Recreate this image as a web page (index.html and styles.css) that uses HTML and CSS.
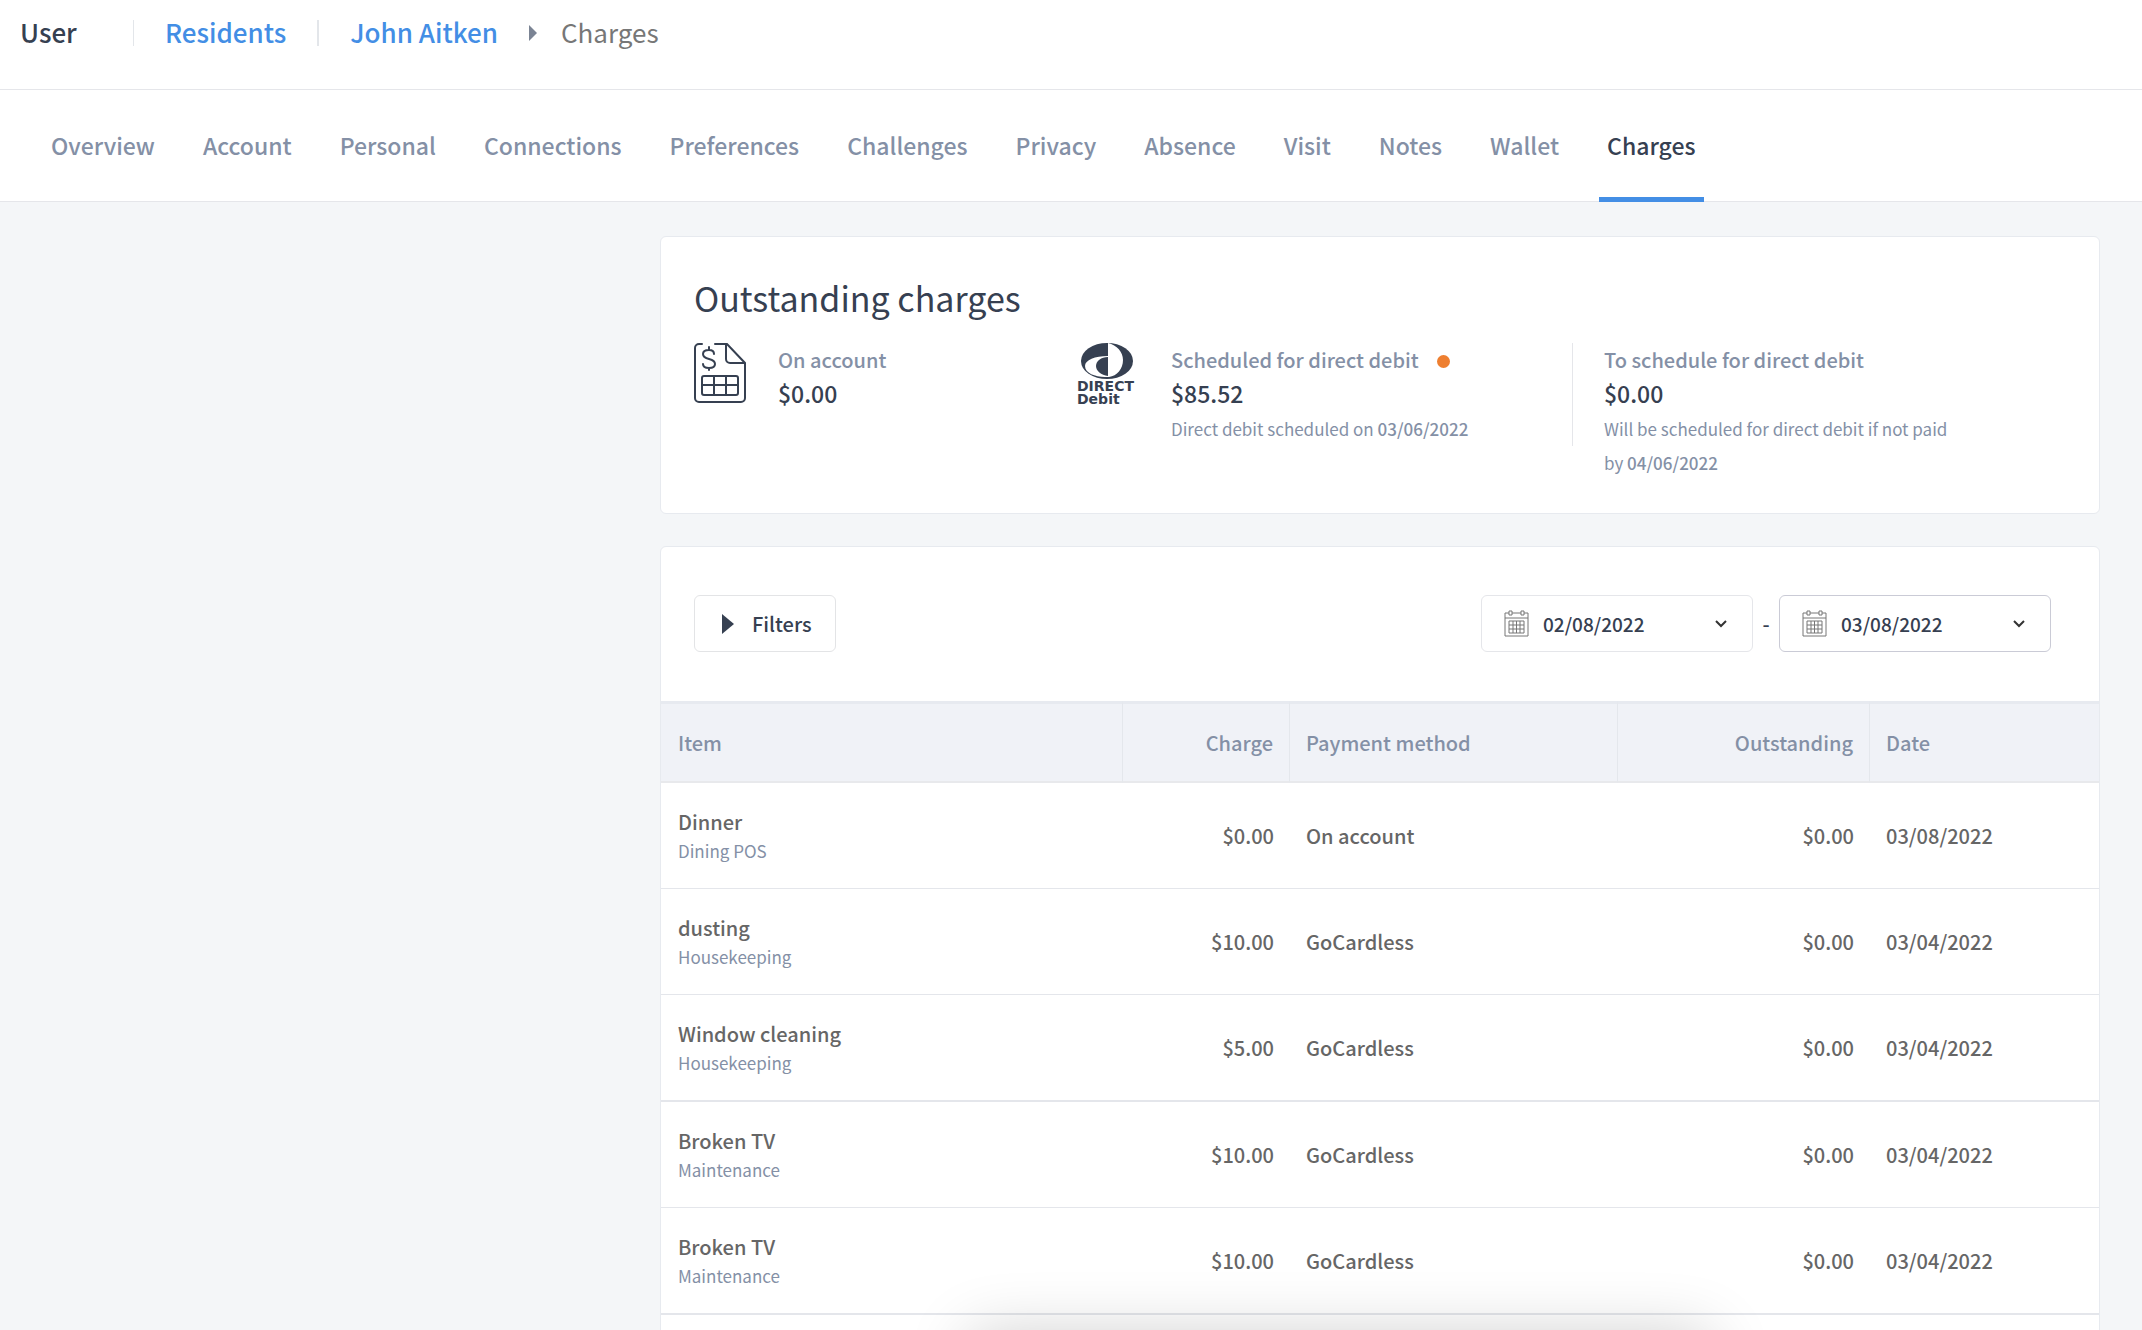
FILE: index.html
```html
<!DOCTYPE html>
<html lang="en">
<head>
    <meta charset="UTF-8">
    <title>Charges</title>
    <link rel="stylesheet" href="styles.css">
</head>
<body>
<header class="topbar">
    <span class="section">User</span>
    <nav class="crumbs" aria-label="Breadcrumb">
        <a class="crumb" href="#">Residents</a>
        <a class="crumb second" href="#">John Aitken</a>
        <svg class="crumb-arrow" width="8" height="16" viewBox="0 0 8 16"><path d="M0 0l8 8-8 8z"/></svg>
        <span class="current">Charges</span>
    </nav>
</header>
<nav class="tabs" aria-label="Resident">
    <a href="#">Overview</a>
    <a href="#">Account</a>
    <a href="#">Personal</a>
    <a href="#">Connections</a>
    <a href="#">Preferences</a>
    <a href="#">Challenges</a>
    <a href="#">Privacy</a>
    <a href="#">Absence</a>
    <a href="#">Visit</a>
    <a href="#">Notes</a>
    <a href="#">Wallet</a>
    <a class="active" href="#">Charges</a>
</nav>
<main class="content">
    <section class="card summary">
        <h1>Outstanding charges</h1>
        <div class="totals">
            <div class="total account">
                <!-- invoice icon -->
                <svg class="invoice" width="52" height="60" viewBox="0 0 52 60">
                    <path d="M8 1H5a4 4 0 0 0-4 4v50a4 4 0 0 0 4 4h42a4 4 0 0 0 4-4V20L33 1H21M32 1v15a4 4 0 0 0 4 4h15"/>
                    <path d="M20 11c0-3-2-4-5-4s-6 1-6 4 2 4 6 5 6 2 6 5-3 4-6 4-6-1-6-4M15 4v3M15 25v2"/>
                    <rect x="8" y="33" width="36" height="19" rx="2"/>
                    <path d="M8 42h36M20 33v19M32 33v19"/>
                </svg>
                <div class="total-text">
                    <p class="label">On account</p>
                    <p class="amount">$0.00</p>
                </div>
            </div>
            <div class="total scheduled">
                <!-- direct debit logo -->
                <svg class="debit" width="62" height="62" viewBox="0 0 62 62">
                    <ellipse cx="30" cy="18" rx="26" ry="18"/>
                    <path class="cut" d="M31 0c9 2 15 9 15 17 0 9-6 16-14 17h-4C18 34 8 30 8 23c0-6 10-10 23-10z"/>
                    <path d="M31 14v19c-7-1-12-5-12-10s5-9 12-9z"/>
                    <text x="0" y="48">DIRECT</text>
                    <text x="0" y="61">Debit</text>
                </svg>
                <div class="total-text">
                    <p class="label">Scheduled for direct debit <i class="dot"></i></p>
                    <p class="amount">$85.52</p>
                    <p class="hint">Direct debit scheduled on <b>03/06/2022</b></p>
                </div>
            </div>
            <div class="total pending">
                <div class="total-text">
                    <p class="label">To schedule for direct debit</p>
                    <p class="amount">$0.00</p>
                    <p class="hint">Will be scheduled for direct debit if not paid by <b>04/06/2022</b></p>
                </div>
            </div>
        </div>
    </section>
    <section class="card list">
        <div class="toolbar">
            <button class="filters" type="button">
                <svg width="12" height="20" viewBox="0 0 12 20"><path d="M0 0l12 10L0 20z"/></svg>
                Filters
            </button>
            <div class="range">
                <label class="date">
                    <svg class="calendar" width="25" height="27" viewBox="0 0 25 27">
                        <path d="M5 3H1v23h23V3h-4M8 3h9M1 8h23"/>
                        <path d="M5 1h3v4H5zM17 1h3v4h-3z"/>
                        <path d="M5 11h15v12H5zM5 15h15M5 19h15M9 11v12M12.5 11v12M16 11v12"/>
                    </svg>
                    <input type="text" value="02/08/2022" aria-label="From date">
                    <svg class="chevron" width="12" height="8" viewBox="0 0 12 8"><path d="M1 1l5 5 5-5"/></svg>
                </label>
                <span class="dash">-</span>
                <label class="date focused">
                    <svg class="calendar" width="25" height="27" viewBox="0 0 25 27">
                        <path d="M5 3H1v23h23V3h-4M8 3h9M1 8h23"/>
                        <path d="M5 1h3v4H5zM17 1h3v4h-3z"/>
                        <path d="M5 11h15v12H5zM5 15h15M5 19h15M9 11v12M12.5 11v12M16 11v12"/>
                    </svg>
                    <input type="text" value="03/08/2022" aria-label="To date">
                    <svg class="chevron" width="12" height="8" viewBox="0 0 12 8"><path d="M1 1l5 5 5-5"/></svg>
                </label>
            </div>
        </div>
        <table class="charges">
            <colgroup>
                <col>
                <col class="col-charge">
                <col class="col-method">
                <col class="col-outstanding">
                <col class="col-date">
            </colgroup>
            <thead>
            <tr>
                <th class="item">Item</th>
                <th class="num">Charge</th>
                <th>Payment method</th>
                <th class="num">Outstanding</th>
                <th>Date</th>
            </tr>
            </thead>
            <tbody>
            <tr>
                <td class="item">Dinner<small>Dining POS</small></td>
                <td class="num">$0.00</td>
                <td>On account</td>
                <td class="num">$0.00</td>
                <td>03/08/2022</td>
            </tr>
            <tr>
                <td class="item">dusting<small>Housekeeping</small></td>
                <td class="num">$10.00</td>
                <td>GoCardless</td>
                <td class="num">$0.00</td>
                <td>03/04/2022</td>
            </tr>
            <tr class="thick">
                <td class="item">Window cleaning<small>Housekeeping</small></td>
                <td class="num">$5.00</td>
                <td>GoCardless</td>
                <td class="num">$0.00</td>
                <td>03/04/2022</td>
            </tr>
            <tr>
                <td class="item">Broken TV<small>Maintenance</small></td>
                <td class="num">$10.00</td>
                <td>GoCardless</td>
                <td class="num">$0.00</td>
                <td>03/04/2022</td>
            </tr>
            <tr class="thick">
                <td class="item">Broken TV<small>Maintenance</small></td>
                <td class="num">$10.00</td>
                <td>GoCardless</td>
                <td class="num">$0.00</td>
                <td>03/04/2022</td>
            </tr>
            </tbody>
        </table>
    </section>
</main>
<div class="bottom-shadow"></div>
</body>
</html>
```
FILE: styles.css
```css
* {
    margin: 0;
    padding: 0;
    box-sizing: border-box;
}

body {
    min-height: 100vh;
    overflow: hidden;
    background: #f4f6f8;
    color: #364051;
    font-family: "Noto Sans CJK SC", "Noto Sans", sans-serif;
    font-size: 20px;
    font-weight: 500;
    line-height: 34px;
}

a {
    text-decoration: none;
}

svg {
    flex: none;
}

/* header */
.topbar {
    display: flex;
    align-items: flex-start;
    height: 90px;
    padding: 20px 20px 0;
    background: #fff;
    border-bottom: 1px solid #e5e6ea;
    font-size: 26px;
    line-height: 24px;
}

.section {
    width: 113px;
}

.crumbs {
    display: flex;
    align-items: flex-start;
}

.crumb {
    padding: 0 31px 2px;
    border-left: 1px solid #e3e6ea;
    color: #438ee5;
}

.second {
    border-left-width: 2px;
}

.crumb-arrow {
    margin-top: 5px;
    fill: #7b8494;
}

.current {
    margin-left: 24px;
    color: #777;
    font-weight: 400;
}

.tabs {
    display: flex;
    gap: 32px;
    height: 112px;
    padding: 0 43px;
    background: #fff;
    border-bottom: 1px solid #e5e6ea;
    font-size: 23px;
    line-height: 110px;
}

.tabs a {
    height: 112px;
    padding: 0 8px;
    color: #8490a6;
}

.tabs .active {
    color: #364051;
    border-bottom: 5px solid #438ee5;
}

/* cards */
.content {
    display: flex;
    flex-direction: column;
    gap: 32px;
    padding: 34px 42px 0 660px;
}

.card {
    background: #fff;
    border: 1px solid #e7eaef;
    border-radius: 6px;
}

.summary {
    padding: 36px 33px 33px;
}

h1 {
    font-size: 34px;
    font-weight: 400;
    line-height: 50px;
}

.totals {
    display: flex;
    align-items: flex-start;
    padding-top: 20px;
}

.total {
    display: flex;
    gap: 32px;
}

.total-text {
    padding-top: 1px;
}

.account {
    width: 383px;
}

.scheduled {
    width: 496px;
    border-right: 1px solid #e5e6ea;
}

.pending {
    flex: 1;
    max-width: 392px;
    padding-left: 31px;
}

.invoice {
    fill: none;
    stroke: #364051;
    stroke-width: 2;
    stroke-linecap: round;
}

.debit {
    overflow: visible;
    fill: #364051;
    font-family: "DejaVu Sans", sans-serif;
    font-size: 14px;
    font-weight: 700;
}

.debit .cut {
    fill: #fff;
}

.label {
    color: #8490a6;
    line-height: 32px;
}

.amount {
    font-size: 23px;
}

.hint {
    margin-top: 2px;
    color: #8490a6;
    font-size: 17px;
    font-weight: 400;
}

.hint b {
    font-weight: 500;
}

.dot {
    display: inline-block;
    width: 13px;
    height: 13px;
    margin-left: 14px;
    border-radius: 50%;
    background: #ee7f30;
}

/* toolbar */
.toolbar {
    display: flex;
    justify-content: space-between;
    padding: 48px 48px 49px 33px;
}

.filters {
    display: flex;
    align-items: center;
    gap: 18px;
    height: 57px;
    padding: 0 23px 0 27px;
    background: #fff;
    border: 1px solid #e3e4e6;
    border-radius: 6px;
    color: #364051;
    font: inherit;
}

.filters svg {
    fill: #364051;
}

.range {
    display: flex;
    align-items: center;
}

.date {
    display: flex;
    align-items: center;
    width: 272px;
    height: 57px;
    padding: 0 25px 0 22px;
    border: 1px solid #e5e6ea;
    border-radius: 6px;
}

.focused {
    border-color: #cacbd6;
}

.date input {
    flex: 1;
    min-width: 0;
    margin-left: 14px;
    border: 0;
    background: none;
    color: #364051;
    font: inherit;
    font-size: 19px;
}

.dash {
    width: 26px;
    text-align: center;
}

.calendar {
    fill: none;
    stroke: #777;
    stroke-width: 1;
}

.chevron {
    fill: none;
    stroke: #333;
    stroke-width: 2;
}

/* table */
.list {
    padding-bottom: 32px;
}

.charges {
    width: 100%;
    table-layout: fixed;
    border-collapse: separate;
    border-spacing: 0;
}

.col-charge {
    width: 167px;
}

.col-method {
    width: 328px;
}

.col-outstanding {
    width: 252px;
}

.col-date {
    width: 229px;
}

th {
    height: 82px;
    padding: 0 16px;
    background: #f0f2f7;
    border-top: 3px solid #e7eaf0;
    border-bottom: 2px solid #e8e9ec;
    border-right: 1px solid #e4e7ec;
    color: #8490a6;
    font-weight: 500;
    text-align: left;
}

th:last-child {
    border-right: 0;
}

td {
    height: 106px;
    padding: 0 16px;
    border-bottom: 1px solid #e4e6eb;
    color: #666;
}

.thick td {
    height: 107px;
    border-bottom-width: 2px;
}

.item {
    padding-left: 17px;
}

td.item {
    padding-bottom: 4px;
}

td small {
    display: block;
    color: #8490a6;
    font-size: 17px;
    font-weight: 400;
    line-height: 24px;
}

.num {
    text-align: right;
}

/* shadow of the panel docked below the window */
.bottom-shadow {
    position: fixed;
    top: 100%;
    left: 970px;
    width: 740px;
    height: 100px;
    box-shadow: 0 5px 65px rgba(0, 0, 0, 0.2);
}
```
